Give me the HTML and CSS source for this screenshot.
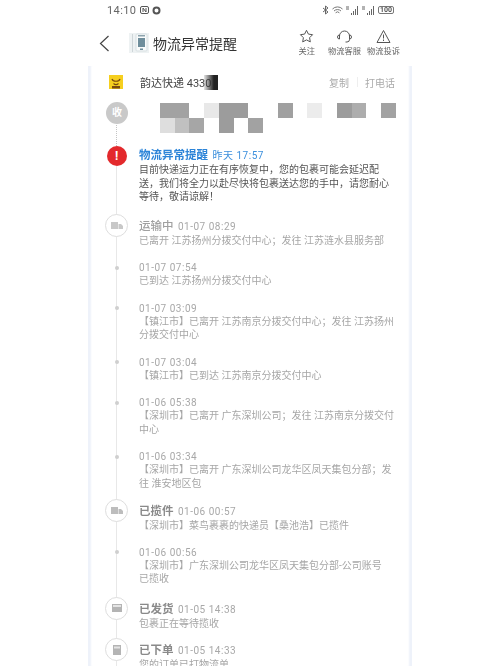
FILE: index.html
```html
<!DOCTYPE html>
<html lang="zh">
<head>
<meta charset="utf-8">
<title>物流异常提醒</title>
<link rel="stylesheet" href="styles.css">
</head>
<body>
<div class="phone">
  <div class="status">
    <div class="status-left">
      <span>14:10</span>
      <svg width="9" height="8" viewBox="0 0 9 8"><rect x="0.5" y="0.5" width="8" height="7" rx="1.5" fill="none" stroke="#555"/><path d="M3 6V2l3 4V2" fill="none" stroke="#555"/></svg>
      <svg width="9" height="9" viewBox="0 0 9 9"><circle cx="4.5" cy="4.5" r="3" fill="none" stroke="#555" stroke-width="2"/></svg>
    </div>
    <div class="status-right">
      <svg width="7" height="10" viewBox="0 0 7 10"><path d="M1 3l5 4-2.5 2V1L6 3 1 7" fill="none" stroke="#666"/></svg>
      <svg width="11" height="9" viewBox="0 0 11 9"><path d="M.5 3a7 7 0 0 1 10 0M2 5a5 5 0 0 1 7 0M3.6 6.8a2.6 2.6 0 0 1 3.8 0" fill="none" stroke="#777"/></svg>
      <svg class="sig" width="13" height="9" viewBox="0 0 13 9"><path d="M0 1h3M0 3h3M5.500 9V7M7.500 9V5M9.500 9V3M11.500 9V0" fill="none" stroke="#666"/></svg>
      <svg class="sig" width="13" height="9" viewBox="0 0 13 9"><path d="M0 1h3M0 3h3M5.500 9V7M7.500 9V5M9.500 9V3M11.500 9V0" fill="none" stroke="#666"/></svg>
      <span class="battery">100</span>
    </div>
  </div>

  <header class="nav">
    <svg class="back" width="11" height="17" viewBox="0 0 11 17"><path d="M9.500 1L1.500 8.500l8 7.500" fill="none" stroke="#444" stroke-width="1.200"/></svg>
    <svg class="thumb" width="20" height="20" viewBox="0 0 20 20">
      <rect x="0" y="0" width="20" height="20" fill="#eef2f3"/>
      <rect x="3" y="1" width="1" height="18" fill="#cfd6d9"/>
      <rect x="7" y="1" width="11" height="17" rx="1" fill="#f9fbfb" stroke="#d7dfe2"/>
      <rect x="9" y="5" width="7" height="9" fill="#6f8e9c"/>
      <rect x="9" y="2" width="7" height="1.500" fill="#8da3ad"/>
      <rect x="11" y="15.500" width="3" height="1.500" fill="#6f8e9c"/>
    </svg>
    <h1 class="nav-title">物流异常提醒</h1>
    <div class="nav-actions">
      <div class="action a-follow">
        <svg width="15" height="15" viewBox="0 0 15 15"><path d="M7.500 1.300l1.900 3.800 4.200.6-3 3 .7 4.200-3.800-2-3.800 2 .7-4.200-3-3 4.200-.6z" fill="none" stroke="#555" stroke-linejoin="round"/></svg>
        <span>关注</span>
      </div>
      <div class="action a-service">
        <svg width="15" height="15" viewBox="0 0 15 15"><path d="M2.500 7a5 5 0 0 1 10 0v3.500a2.500 2.500 0 0 1-2.500 2.500H8.500M2.500 6A2 2 0 0 0 2.500 10zM12.500 6a2 2 0 0 1 0 4z" fill="none" stroke="#555"/></svg>
        <span>物流客服</span>
      </div>
      <div class="action a-report">
        <svg width="15" height="15" viewBox="0 0 15 15"><path d="M7.500 1.500L14 13.500H1z" fill="none" stroke="#555" stroke-linejoin="round"/><path d="M7.500 5.500v4M7.500 10.500v1.500" stroke="#555"/></svg>
        <span>物流投诉</span>
      </div>
    </div>
  </header>

  <main class="card">
    <div class="company">
      <div class="logo-col">
        <div class="logo"><svg width="14" height="14" viewBox="0 0 14 14"><path d="M3 3c1 3 7 3 8 0M4.500 7.500c1.500 1.300 3.500 1.300 5 0" fill="none" stroke="#7a4a10" stroke-width="1.200"/><rect x="3" y="10" width="8" height="2.500" fill="#7a4a10"/></svg></div>
      </div>
      <div class="company-text">韵达快递 4330<span class="redact"></span></div>
      <div class="company-links"><span>复制</span><i></i><span>打电话</span></div>
    </div>

    <div class="recv">
      <div class="recv-badge">收</div>
      <svg class="mosaic" width="240" height="30" viewBox="0 0 240 30">
        <rect x="0" y="0" width="29" height="15" fill="#a2a2a2"/>
        <rect x="44" y="0" width="15" height="15" fill="#e8e8e8"/>
        <rect x="59" y="0" width="29" height="15" fill="#9c9c9c"/>
        <rect x="118" y="0" width="15" height="15" fill="#a0a0a0"/>
        <rect x="147" y="0" width="15" height="15" fill="#ececec"/>
        <rect x="177" y="0" width="15" height="15" fill="#9c9c9c"/>
        <rect x="192" y="0" width="14" height="15" fill="#adadad"/>
        <rect x="221" y="0" width="15" height="15" fill="#a2a2a2"/>
        <rect x="0" y="15" width="15" height="15" fill="#dedede"/>
        <rect x="15" y="15" width="14" height="15" fill="#c0c0c0"/>
        <rect x="29" y="15" width="15" height="15" fill="#a6a6a6"/>
        <rect x="59" y="15" width="15" height="15" fill="#9c9c9c"/>
        <rect x="88" y="15" width="15" height="15" fill="#a2a2a2"/>
      </svg>
    </div>

    <ol class="timeline">
      <li class="entry alert">
        <div class="node"><span class="alert-dot">!</span></div>
        <div class="body">
          <div class="head"><b class="alert-title">物流异常提醒</b><span class="alert-time">昨天 17:57</span></div>
          <p class="alert-text">目前快递运力正在有序恢复中，您的包裹可能会延迟配送，我们将全力以赴尽快将包裹送达您的手中，请您耐心等待，敬请谅解！</p>
        </div>
      </li>
      <li class="entry major first-major">
        <div class="node"><span class="ring"><svg width="12" height="7" viewBox="0 0 12 7"><path d="M0 0h7v7H0zM7.500 2H10l2 2v3H7.500z" fill="#c8c8c8"/></svg></span></div>
        <div class="body">
          <div class="head"><b>运输中</b><span class="time">01-07 08:29</span></div>
          <p>已离开 江苏扬州分拨交付中心；发往 江苏涟水县服务部</p>
        </div>
      </li>
      <li class="entry minor">
        <div class="node"><span class="dot"></span></div>
        <div class="body"><div class="stamp">01-07 07:54</div><p>已到达 江苏扬州分拨交付中心</p></div>
      </li>
      <li class="entry minor">
        <div class="node"><span class="dot"></span></div>
        <div class="body"><div class="stamp">01-07 03:09</div><p>【镇江市】已离开 江苏南京分拨交付中心；发往 江苏扬州分拨交付中心</p></div>
      </li>
      <li class="entry minor">
        <div class="node"><span class="dot"></span></div>
        <div class="body"><div class="stamp">01-07 03:04</div><p>【镇江市】已到达 江苏南京分拨交付中心</p></div>
      </li>
      <li class="entry minor">
        <div class="node"><span class="dot"></span></div>
        <div class="body"><div class="stamp">01-06 05:38</div><p>【深圳市】已离开 广东深圳公司；发往 江苏南京分拨交付中心</p></div>
      </li>
      <li class="entry minor">
        <div class="node"><span class="dot"></span></div>
        <div class="body"><div class="stamp">01-06 03:34</div><p>【深圳市】已离开 广东深圳公司龙华区凤天集包分部；发往 淮安地区包</p></div>
      </li>
      <li class="entry major">
        <div class="node"><span class="ring"><svg width="12" height="7" viewBox="0 0 12 7"><path d="M0 0h7v7H0zM7.500 2H10l2 2v3H7.500z" fill="#bdbdbd"/></svg></span></div>
        <div class="body">
          <div class="head"><b class="dark">已揽件</b><span class="time">01-06 00:57</span></div>
          <p>【深圳市】菜鸟裹裹的快递员【桑池浩】已揽件</p>
        </div>
      </li>
      <li class="entry minor wide-gap">
        <div class="node"><span class="dot"></span></div>
        <div class="body"><div class="stamp">01-06 00:56</div><p>【深圳市】广东深圳公司龙华区凤天集包分部-公司账号<br>已揽收</p></div>
      </li>
      <li class="entry major">
        <div class="node"><span class="ring"><svg width="10" height="8" viewBox="0 0 10 8"><rect width="10" height="8" fill="#b4b4b4"/><rect x="1" y="1" width="8" height="2" fill="#e4e4e4"/></svg></span></div>
        <div class="body">
          <div class="head"><b class="dark">已发货</b><span class="time">01-05 14:38</span></div>
          <p>包裹正在等待揽收</p>
        </div>
      </li>
      <li class="entry major">
        <div class="node"><span class="ring"><svg width="8" height="10" viewBox="0 0 8 10"><rect width="8" height="10" fill="#b4b4b4"/><rect x="1" y="1.500" width="6" height="2" fill="#e4e4e4"/></svg></span></div>
        <div class="body">
          <div class="head"><b class="dark">已下单</b><span class="time">01-05 14:33</span></div>
          <p>您的订单已打物流单</p>
        </div>
      </li>
    </ol>
  </main>
</div>
</body>
</html>
```
FILE: styles.css
```css
* { box-sizing: border-box; }
html, body { margin: 0; padding: 0; }
body {
  width: 500px;
  height: 666px;
  overflow: hidden;
  background: #fff;
  font-family: "Roboto", "Noto Sans CJK SC", sans-serif;
  color: #444;
}
.phone { width: 500px; height: 666px; overflow: hidden; filter: blur(0.35px); }

.status {
  height: 20px;
  padding: 0 106px 0 107px;
  display: flex;
  justify-content: space-between;
  align-items: center;
  font-size: 11px;
  color: #666;
}
.status-left { display: flex; align-items: center; gap: 3px; }
.status-left span { margin-right: 1px; letter-spacing: 0.4px; }
.status-right { display: flex; align-items: center; gap: 3px; }
.battery {
  width: 16px;
  height: 8px;
  border: 1px solid #777;
  border-radius: 2px;
  font-size: 7px;
  line-height: 6px;
  font-weight: 700;
  text-align: center;
  color: #555;
}

.nav {
  height: 46px;
  padding: 0 100px 0 99px;
  display: flex;
  align-items: center;
}
.thumb { margin-left: 19px; flex: none; }
.nav-title {
  margin: 0 0 0 4px;
  font-size: 14px;
  font-weight: 400;
  color: #333;
  white-space: nowrap;
}
.nav-actions { margin-left: auto; display: flex; gap: 6px; }
.action {
  display: flex;
  flex-direction: column;
  align-items: center;
  gap: 1px;
  font-size: 8.250px;
  line-height: 12px;
  color: #666;
  white-space: nowrap;
}
.a-follow { margin-right: 7px; }

.card {
  width: 324px;
  height: 600px;
  margin-left: 88px;
  background: #fff;
  box-shadow: inset 4px 0 2px -1px #eef2fa, inset -4px 0 2px -1px #eef2fa;
  overflow: hidden;
}
.company {
  height: 32px;
  padding: 0 17px 0 21px;
  display: flex;
  align-items: center;
}
.logo-col { width: 31px; }
.logo {
  width: 14px;
  height: 14px;
  background: #f6cf1f;
}
.company-text { font-size: 11px; color: #444; display: flex; align-items: center; }
.redact {
  width: 14px;
  height: 15px;
  margin-left: -7px;
  background: linear-gradient(90deg, rgba(120,120,120,0.2), #222 70%);
}
.company-links {
  margin-left: auto;
  display: flex;
  align-items: center;
  gap: 7.500px;
  font-size: 10px;
  color: #aaa;
}
.company-links i { width: 1px; height: 10px; background: #eee; }

.recv {
  height: 50px;
  padding: 4px 0 0 18px;
  display: flex;
  align-items: flex-start;
  position: relative;
}
.recv::after {
  content: "";
  position: absolute;
  left: 28px;
  top: 27px;
  bottom: 0;
  border-left: 1px dotted #c4c4c4;
}
.recv-badge {
  width: 22px;
  height: 22px;
  border-radius: 50%;
  background: #c9c9c9;
  color: #fff;
  font-size: 10px;
  font-weight: 700;
  line-height: 22px;
  text-align: center;
}
.mosaic { margin: 1px 0 0 32px; flex: none; }

.timeline { list-style: none; margin: 0; padding: 0; }
.entry {
  display: flex;
  position: relative;
  margin-bottom: 13px;
}
.entry::before {
  content: "";
  position: absolute;
  left: 28px;
  top: 0;
  bottom: -15px;
  width: 1px;
  background: #e8e8e8;
}
.node {
  position: relative;
  z-index: 1;
  width: 51px;
  flex: none;
  display: flex;
  justify-content: center;
  align-items: center;
  padding-left: 6px;
  height: 15px;
}
.body { width: 257px; }
.head { display: flex; align-items: baseline; gap: 4.500px; line-height: 15px; }
.head b { font-size: 11.500px; font-weight: 500; color: #a0a0a0; }
.head b.dark { color: #8a8a8a; font-weight: 700; }
.time, .stamp { font-size: 10px; color: #a8a8a8; letter-spacing: 0.500px; }
.stamp { height: 14px; line-height: 16px; }
p {
  margin: 0;
  font-size: 10px;
  line-height: 13.500px;
  color: #a6a6a6;
}

.major .head { height: 16px; line-height: 16px; }
.major { margin-bottom: 12px; }
.first-major { margin-bottom: 13px; }
.wide-gap { margin-bottom: 15px; }

.alert { height: 69.500px; margin-bottom: 0; }
.alert::before { top: 18px; bottom: 0; }
.alert-dot {
  flex: none;
  width: 20px;
  height: 20px;
  border-radius: 50%;
  background: #e3292c;
  color: #fff;
  font-size: 12px;
  font-weight: 700;
  text-align: center;
  line-height: 20px;
}
.head .alert-title { color: #2c84d8; font-weight: 700; }
.alert-time { font-size: 10px; color: #3b8fdc; letter-spacing: 0.500px; }
.alert-text { color: #555; }

.ring {
  width: 23px;
  height: 23px;
  flex: none;
  border: 1px solid #dedede;
  border-radius: 50%;
  background: #fff;
  display: flex;
  align-items: center;
  justify-content: center;
}
.dot {
  width: 4px;
  height: 4px;
  border-radius: 50%;
  background: #cfcfcf;
}
```
